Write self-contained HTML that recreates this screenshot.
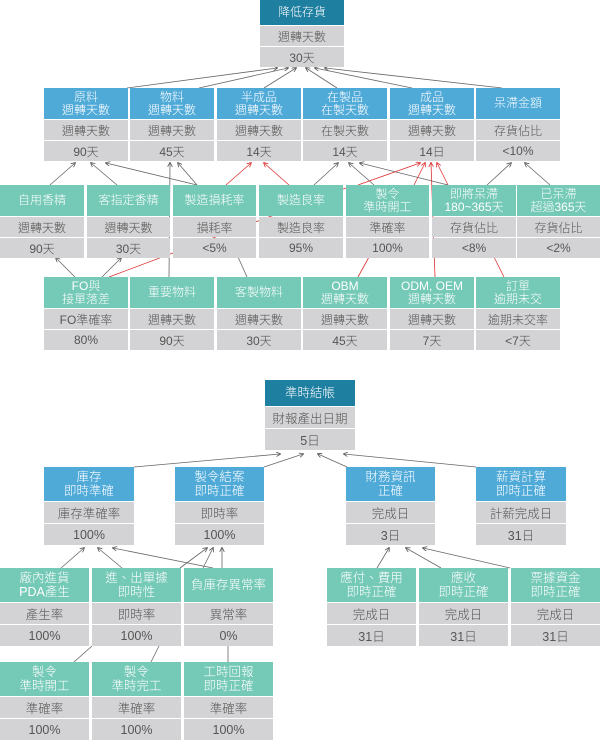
<!DOCTYPE html>
<html><head><meta charset="utf-8"><style>
*{margin:0;padding:0;box-sizing:border-box}
body{width:600px;height:750px;background:#fff;position:relative;overflow:hidden;font-family:"Liberation Sans","Noto Sans CJK TC",sans-serif;font-size:12px;font-weight:300}
.b{position:absolute;z-index:2}
.h{display:flex;align-items:center;justify-content:center;color:#fff;text-align:center;line-height:13px}
.r{background:#d3d3d5;color:#555;display:flex;align-items:center;justify-content:center;margin-top:1px}
.d{background:#1f7fa0}.u{background:#4faad8}.t{background:#74c9b7}
.c1 .h{height:31px}.c1 .r{height:20px}
.c2{font-size:12.5px}
.c2 .h{height:34px;line-height:14px}.c2 .r{height:21px}
svg{position:absolute;left:0;top:0;z-index:1}
</style></head><body>
<svg width="600" height="750">
<defs>
<marker id="ag" markerWidth="6" markerHeight="6" refX="5" refY="3" orient="auto"><path d="M0,0 L6,3 L0,6" fill="none" stroke="#555" stroke-width="1"/></marker>
<marker id="ar" markerWidth="6" markerHeight="6" refX="5" refY="3" orient="auto"><path d="M0,0 L6,3 L0,6" fill="none" stroke="#d33" stroke-width="1"/></marker>
</defs>
<g stroke="#666" stroke-width="0.8" marker-end="url(#ag)">
<line x1="127" y1="88" x2="277" y2="68"/><line x1="199" y1="88" x2="288" y2="68"/><line x1="264" y1="88" x2="296" y2="68"/>
<line x1="337" y1="88" x2="306" y2="68"/><line x1="412" y1="88" x2="315" y2="68"/><line x1="502" y1="88" x2="325" y2="68"/>
<line x1="50" y1="185" x2="75" y2="163"/><line x1="117" y1="185" x2="91" y2="163"/><line x1="197" y1="185" x2="106" y2="163"/>
<line x1="197" y1="185" x2="178" y2="163"/><line x1="169" y1="277" x2="170" y2="163"/>
<line x1="314" y1="185" x2="338" y2="163"/><line x1="374" y1="185" x2="349" y2="163"/><line x1="448" y1="185" x2="360" y2="163"/>
<line x1="487" y1="185" x2="511" y2="163"/><line x1="550" y1="185" x2="525" y2="163"/>
<line x1="75" y1="277" x2="56" y2="258"/><line x1="102" y1="277" x2="121" y2="258"/>
<line x1="134" y1="467" x2="280" y2="454"/><line x1="264" y1="467" x2="303" y2="454"/><line x1="347" y1="467" x2="318" y2="454"/><line x1="476" y1="467" x2="344" y2="454"/>
<line x1="61" y1="568" x2="84" y2="548"/><line x1="122" y1="568" x2="98" y2="548"/><line x1="213" y1="568" x2="113" y2="548"/>
<line x1="180" y1="568" x2="207" y2="548"/><line x1="203" y1="568" x2="213" y2="548"/><line x1="222" y1="568" x2="222" y2="548"/>
<line x1="377" y1="568" x2="389" y2="548"/><line x1="441" y1="568" x2="406" y2="548"/><line x1="510" y1="568" x2="423" y2="548"/>
</g>
<g stroke="#666" stroke-width="0.8">
<line x1="247" y1="277" x2="238" y2="257"/>
<line x1="74" y1="662" x2="92" y2="646"/><line x1="151" y1="662" x2="159" y2="646"/><line x1="228" y1="662" x2="228" y2="646"/>
</g>
<g stroke="#d33" stroke-width="0.8" marker-end="url(#ar)">
<line x1="226" y1="185" x2="251" y2="163"/><line x1="289" y1="185" x2="264" y2="163"/>
<line x1="414" y1="185" x2="425" y2="163"/><line x1="358" y1="185" x2="420" y2="163"/>
<line x1="435" y1="277" x2="431" y2="163"/><line x1="448" y1="185" x2="437" y2="163"/>
</g>
<g stroke="#d33" stroke-width="0.8">
<line x1="109" y1="277" x2="346" y2="188"/><line x1="358" y1="277" x2="369" y2="257"/><line x1="504" y1="277" x2="494" y2="257"/>
</g>
</svg>

<div class="b c1" style="left:260px;top:0;width:84px"><div class="h d" style="height:25px">降低存貨</div><div class="r">週轉天數</div><div class="r">30天</div></div>

<div class="b c1" style="left:44px;top:88px;width:84px"><div class="h u">原料<br>週轉天數</div><div class="r">週轉天數</div><div class="r">90天</div></div>
<div class="b c1" style="left:130px;top:88px;width:84px"><div class="h u">物料<br>週轉天數</div><div class="r">週轉天數</div><div class="r">45天</div></div>
<div class="b c1" style="left:217px;top:88px;width:84px"><div class="h u">半成品<br>週轉天數</div><div class="r">週轉天數</div><div class="r">14天</div></div>
<div class="b c1" style="left:303px;top:88px;width:84px"><div class="h u">在製品<br>在製天數</div><div class="r">在製天數</div><div class="r">14天</div></div>
<div class="b c1" style="left:390px;top:88px;width:84px"><div class="h u">成品<br>週轉天數</div><div class="r">週轉天數</div><div class="r">14日</div></div>
<div class="b c1" style="left:476px;top:88px;width:84px"><div class="h u">呆滯金額</div><div class="r">存貨佔比</div><div class="r">&lt;10%</div></div>

<div class="b c1" style="left:0;top:185px;width:84px"><div class="h t">自用香精</div><div class="r">週轉天數</div><div class="r">90天</div></div>
<div class="b c1" style="left:87px;top:185px;width:83px"><div class="h t">客指定香精</div><div class="r">週轉天數</div><div class="r">30天</div></div>
<div class="b c1" style="left:173px;top:185px;width:83px"><div class="h t">製造損耗率</div><div class="r">損耗率</div><div class="r">&lt;5%</div></div>
<div class="b c1" style="left:259px;top:185px;width:84px"><div class="h t">製造良率</div><div class="r">製造良率</div><div class="r">95%</div></div>
<div class="b c1" style="left:346px;top:185px;width:83px"><div class="h t">製令<br>準時開工</div><div class="r">準確率</div><div class="r">100%</div></div>
<div class="b c1" style="left:432px;top:185px;width:84px"><div class="h t">即將呆滯<br>180~365天</div><div class="r">存貨佔比</div><div class="r">&lt;8%</div></div>
<div class="b c1" style="left:517px;top:185px;width:83px"><div class="h t">已呆滯<br>超過365天</div><div class="r">存貨佔比</div><div class="r">&lt;2%</div></div>

<div class="b c1" style="left:44px;top:277px;width:84px"><div class="h t">FO與<br>接單落差</div><div class="r">FO準確率</div><div class="r">80%</div></div>
<div class="b c1" style="left:130px;top:277px;width:84px"><div class="h t">重要物料</div><div class="r">週轉天數</div><div class="r">90天</div></div>
<div class="b c1" style="left:217px;top:277px;width:84px"><div class="h t">客製物料</div><div class="r">週轉天數</div><div class="r">30天</div></div>
<div class="b c1" style="left:303px;top:277px;width:84px"><div class="h t">OBM<br>週轉天數</div><div class="r">週轉天數</div><div class="r">45天</div></div>
<div class="b c1" style="left:390px;top:277px;width:84px"><div class="h t">ODM, OEM<br>週轉天數</div><div class="r">週轉天數</div><div class="r">7天</div></div>
<div class="b c1" style="left:476px;top:277px;width:84px"><div class="h t">訂單<br>逾期未交</div><div class="r">逾期未交率</div><div class="r">&lt;7天</div></div>

<div class="b c2" style="left:265px;top:380px;width:90px"><div class="h d" style="height:26px">準時結帳</div><div class="r">財報產出日期</div><div class="r">5日</div></div>

<div class="b c2" style="left:44px;top:467px;width:90px"><div class="h u">庫存<br>即時準確</div><div class="r">庫存準確率</div><div class="r">100%</div></div>
<div class="b c2" style="left:175px;top:467px;width:89px"><div class="h u">製令結案<br>即時正確</div><div class="r">即時率</div><div class="r">100%</div></div>
<div class="b c2" style="left:346px;top:467px;width:89px"><div class="h u">財務資訊<br>正確</div><div class="r">完成日</div><div class="r">3日</div></div>
<div class="b c2" style="left:476px;top:467px;width:90px"><div class="h u">薪資計算<br>即時正確</div><div class="r">計薪完成日</div><div class="r">31日</div></div>

<div class="b c2" style="left:0;top:568px;width:89px"><div class="h t">廠內進貨<br>PDA產生</div><div class="r">產生率</div><div class="r">100%</div></div>
<div class="b c2" style="left:92px;top:568px;width:89px"><div class="h t">進、出單據<br>即時性</div><div class="r">即時率</div><div class="r">100%</div></div>
<div class="b c2" style="left:184px;top:568px;width:89px"><div class="h t">負庫存異常率</div><div class="r">異常率</div><div class="r">0%</div></div>
<div class="b c2" style="left:327px;top:568px;width:89px"><div class="h t">應付、費用<br>即時正確</div><div class="r">完成日</div><div class="r">31日</div></div>
<div class="b c2" style="left:419px;top:568px;width:89px"><div class="h t">應收<br>即時正確</div><div class="r">完成日</div><div class="r">31日</div></div>
<div class="b c2" style="left:511px;top:568px;width:89px"><div class="h t">票據資金<br>即時正確</div><div class="r">完成日</div><div class="r">31日</div></div>

<div class="b c2" style="left:0;top:662px;width:89px"><div class="h t">製令<br>準時開工</div><div class="r">準確率</div><div class="r">100%</div></div>
<div class="b c2" style="left:92px;top:662px;width:89px"><div class="h t">製令<br>準時完工</div><div class="r">準確率</div><div class="r">100%</div></div>
<div class="b c2" style="left:184px;top:662px;width:89px"><div class="h t">工時回報<br>即時正確</div><div class="r">準確率</div><div class="r">100%</div></div>
</body></html>
